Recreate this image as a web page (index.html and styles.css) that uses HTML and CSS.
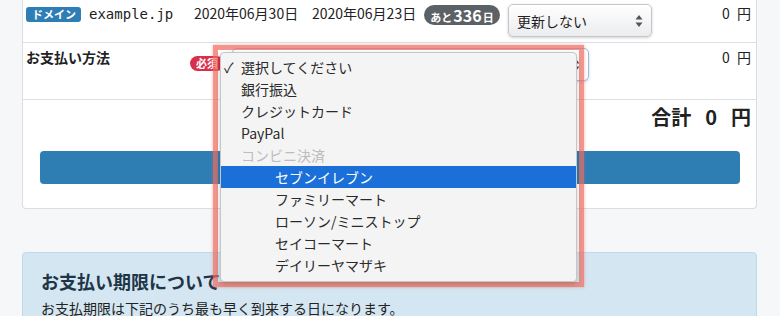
FILE: index.html
```html
<!DOCTYPE html>
<html lang="ja">
<head>
<meta charset="utf-8">
<link rel="stylesheet" href="styles.css">
</head>
<body>
<div class="page">
  <div class="card">
    <div class="row row1">
      <div class="c-name"><span class="badge-blue">ドメイン</span><span class="domain">example.jp</span></div>
      <div class="c-date1">2020年06月30日</div>
      <div class="c-date2">2020年06月23日</div>
      <div class="c-left"><span class="badge-left"><span class="s">あと</span><span class="n">336</span><span class="s">日</span></span></div>
      <div class="c-sel">
        <div class="select mac">
          <span>更新しない</span>
          <svg class="arrows" width="8" height="14" viewBox="0 0 8 14"><path d="M4 1 L7.5 5.5 H0.5 Z M4 13 L7.5 8.5 H0.5 Z" fill="#555"/></svg>
        </div>
      </div>
      <div class="c-price">0 円</div>
    </div>
    <div class="row row2">
      <div class="c-label">お支払い方法</div>
      <div class="c-req"><span class="badge-red">必須</span></div>
      <div class="c-sel2">
        <div class="select focus">
          <span>選択してください</span>
          <svg class="arrows" width="8" height="14" viewBox="0 0 8 14"><path d="M4 1 L7.5 5.5 H0.5 Z M4 13 L7.5 8.5 H0.5 Z" fill="#555"/></svg>
        </div>
      </div>
      <div class="c-price">0 円</div>
    </div>
    <div class="row row3">
      <div class="total"><span>合計</span><span class="tnum">0</span><span>円</span></div>
      <div class="btn"></div>
    </div>
  </div>

  <div class="info">
    <div class="info-title">お支払い期限について</div>
    <div class="info-text">お支払期限は下記のうち最も早く到来する日になります。</div>
  </div>

  <div class="ring"></div>
  <ul class="menu">
    <li class="opt"><span class="check">✓</span>選択してください</li>
    <li class="opt">銀行振込</li>
    <li class="opt">クレジットカード</li>
    <li class="opt">PayPal</li>
    <li class="opt disabled">コンビニ決済</li>
    <li class="opt sub selected">セブンイレブン</li>
    <li class="opt sub">ファミリーマート</li>
    <li class="opt sub">ローソン/ミニストップ</li>
    <li class="opt sub">セイコーマート</li>
    <li class="opt sub">デイリーヤマザキ</li>
  </ul>
</div>
</body>
</html>
```

FILE: styles.css
```css
* { box-sizing: border-box; }
html, body { margin: 0; padding: 0; }
body {
  background: #f6f7f9;
  font-family: "Noto Sans CJK JP", "Noto Sans", sans-serif;
  color: #222;
  font-size: 14px;
  width: 780px;
  height: 316px;
  overflow: hidden;
}
.page { position: relative; height: 316px; overflow: hidden; }

.card {
  margin: 0 23px 0 22px;
  background: #fff;
  border: 1px solid #dcdde0;
  border-top: none;
  border-radius: 0 0 4px 4px;
}
.row { display: flex; border-bottom: 1px solid #dedfe2; }
.row1 { height: 43px; padding: 0 5px 0 3px; align-items: flex-start; }
.row2 { height: 57px; padding: 0 5px 0 3px; align-items: flex-start; }
.row3 { border-bottom: none; height: 108px; flex-direction: column; padding: 4px 5px 0 17px; }

.c-name { width: 168px; display: flex; align-items: center; padding-top: 5px; }
.badge-blue {
  background: #2e7db5; color: #fff; font-weight: 700; font-size: 11px;
  line-height: 15px; height: 15px; padding: 0 5px 0 6px; border-radius: 3px; margin-top: 1px;
}
.domain { font-family: "DejaVu Sans Mono", "Liberation Mono", monospace; font-size: 14px; margin-left: 8px; line-height: 18px; }
.c-date1 { width: 118px; padding-top: 3px; line-height: 20px; }
.c-date2 { width: 112px; padding-top: 3px; line-height: 20px; }
.c-left { width: 84px; padding-top: 5px; }
.badge-left {
  display: inline-flex; align-items: baseline; justify-content: center;
  background: #5c6166; color: #fff; font-weight: 700; border-radius: 10px;
  height: 20px; width: 76px; line-height: 20px;
}
.badge-left .s { font-size: 11px; }
.badge-left .n { font-size: 16px; margin: 0 1px; }
.c-sel { width: 144px; padding-top: 4px; }
.select {
  position: relative; height: 33px; border: 1px solid #c4c6c9; border-radius: 5px;
  background: linear-gradient(#ffffff, #ebecee);
  display: flex; align-items: center; padding-left: 8px; color: #222;
  box-shadow: 0 1px 3px rgba(0,0,0,.18);
}
.arrows { position: absolute; right: 8px; top: 50%; margin-top: -7px; }
.c-price { flex: 1; text-align: right; padding-top: 3px; line-height: 20px; word-spacing: 4px; }

.c-label { width: 164px; font-weight: 700; padding-top: 4px; line-height: 20px; }
.c-req { width: 42px; padding-top: 9px; }
.badge-red {
  display: inline-block; background: #d8304b; color: #fff; font-weight: 700; font-size: 11px;
  line-height: 15px; height: 15px; padding: 0 6px; border-radius: 8px;
}
.c-sel2 { width: 357px; padding-top: 5px; }
.select.focus { border-color: #93bff0; background: #fff; height: 33px; }
.row2 .c-price { padding-top: 4px; }

.total { align-self: flex-end; font-size: 20px; font-weight: 700; line-height: 26px; display: flex; gap: 10px; }
.total .tnum { margin: 0 4px; }
.btn { margin-top: 21px; height: 33px; width: 700px; background: #2e7eb4; border-radius: 4px; }

.info {
  margin: 43px 23px 0 22px;
  background: #d4e6f1; border: 1px solid #bfd9e9; border-radius: 4px;
  padding: 15px 18px 0;
  height: 70px;
}
.info-title { font-size: 18px; font-weight: 700; color: #1e3547; line-height: 26px; }
.info-text { font-size: 14px; color: #222; margin-top: 4px; line-height: 20px; }

.ring {
  position: absolute; left: 213px; top: 45px; width: 371px; height: 242px;
  border: 5px solid rgba(238, 108, 96, .72);
  box-shadow: 0 0 3px rgba(238, 100, 90, .5);
}
.menu {
  position: absolute; left: 220px; top: 52px; width: 357px; height: 230px;
  margin: 0; padding: 3px 0; list-style: none;
  background: #f4f4f4; border: 1px solid #c6c6c6; border-radius: 4px;
  box-shadow: 0 2px 5px rgba(0,0,0,.2);
}
.opt { height: 22px; line-height: 22px; padding-left: 20px; color: #2a2a2a; font-size: 14px; position: relative; }
.opt .check { position: absolute; left: 3px; top: 0; }
.opt.disabled { color: #bdbdbd; }
.opt.sub { padding-left: 54px; }
.opt.selected { background: #1b6fd8; color: #fff; }
```
